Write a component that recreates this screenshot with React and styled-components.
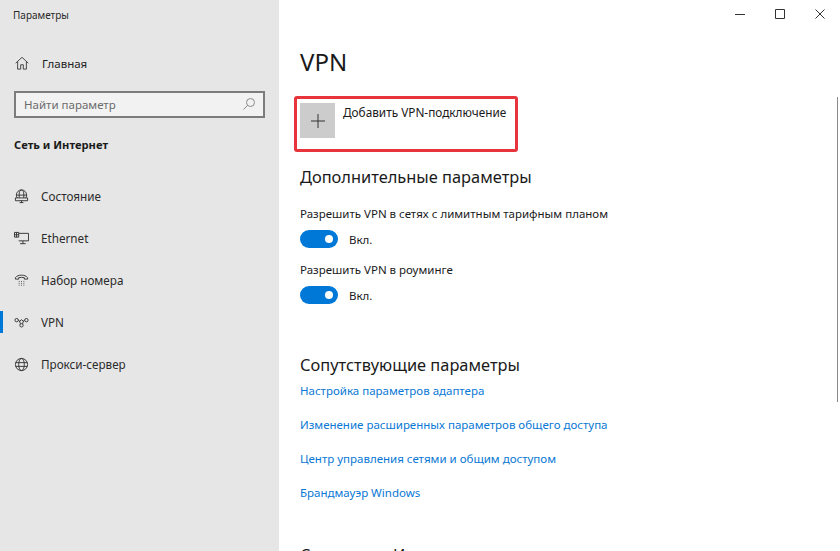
import React from "react"
import styled, { createGlobalStyle } from "styled-components"

const GlobalStyle = createGlobalStyle`
    html, body {
        margin: 0;
        padding: 0;
        height: 100%;
        overflow: hidden;
        background: #ffffff;
        font-family: "Noto Sans", "Open Sans", sans-serif;
        color: #1a1a1a;
    }
    #root {
        height: 100%;
    }
`

const Window = styled.div`
    display: flex;
    width: 840px;
    height: 551px;
    overflow: hidden;
`

const Sidebar = styled.aside`
    display: flex;
    flex-direction: column;
    flex: 0 0 279px;
    height: 551px;
    background: #e6e6e6;
`

const AppTitle = styled.div`
    padding: 8px 0 0 13px;
    height: 22px;
    font-size: 10px;
    line-height: 15px;
    color: #2a2a2a;
`

const HomeRow = styled.div`
    display: flex;
    align-items: center;
    gap: 13px;
    height: 42px;
    margin-top: 12px;
    padding-left: 15px;
    font-size: 11.5px;
    color: #222222;
`

const SearchBox = styled.div`
    display: flex;
    align-items: center;
    justify-content: space-between;
    box-sizing: border-box;
    width: 251px;
    height: 27px;
    margin: 7px 0 0 14px;
    padding: 0 7px 1px 8px;
    background: #f2f2f2;
    border: 2px solid #7c7c7c;
    font-size: 11.5px;
    color: #6b6b6b;
`

const SectionLabel = styled.div`
    margin: 19px 0 22px 14px;
    height: 16px;
    font-size: 11.2px;
    line-height: 16px;
    font-weight: 700;
    color: #1a1a1a;
`

const NavList = styled.nav`
    display: flex;
    flex-direction: column;
`

const NavItem = styled.div`
    position: relative;
    display: flex;
    align-items: center;
    gap: 12px;
    height: 42px;
    padding-left: 14px;
    font-size: 11.7px;
    color: #2b2b2b;

    &::before {
        content: "";
        display: ${props => (props.$active ? "block" : "none")};
        position: absolute;
        left: 0;
        top: 10px;
        width: 3px;
        height: 22px;
        background: #0078d7;
    }
`

const Main = styled.main`
    position: relative;
    flex: 1;
    height: 551px;
    overflow: hidden;
    padding-left: 21px;
`

const WindowControls = styled.div`
    position: absolute;
    top: 0;
    right: 0;
    display: flex;
`

const ControlButton = styled.div`
    display: flex;
    align-items: center;
    justify-content: center;
    width: 40px;
    height: 28px;
`

const Scrollbar = styled.div`
    position: absolute;
    top: 97px;
    right: 2px;
    width: 1px;
    height: 305px;
    background: #8a8a8a;
`

const PageTitle = styled.h1`
    margin: 0;
    padding-top: 44px;
    height: 52px;
    font-size: 24px;
    line-height: 36px;
    font-weight: 400;
    color: #1a1a1a;
`

const AddRow = styled.div`
    display: flex;
    box-sizing: border-box;
    gap: 8px;
    width: 224px;
    height: 56px;
    margin-left: -6px;
    padding: 4px 0 0 3px;
    border: 3px solid #e8353d;
    border-radius: 3px;
    font-size: 11.8px;
    line-height: 16px;
    color: #1a1a1a;
`

const PlusTile = styled.div`
    display: flex;
    align-items: center;
    justify-content: center;
    flex: 0 0 35px;
    height: 35px;
    background: #cccccc;
`

const AddLabel = styled.span`
    padding-top: 1px;
    white-space: nowrap;
`

const SectionTitle = styled.h2`
    margin: ${props => props.$top}px 0 0;
    font-size: 16.4px;
    line-height: 22px;
    font-weight: 400;
    color: #1a1a1a;
`

const OptionLabel = styled.div`
    margin-top: ${props => props.$top}px;
    font-size: 11.5px;
    line-height: 16px;
    color: #1a1a1a;
`

const ToggleRow = styled.div`
    display: flex;
    align-items: center;
    gap: 11px;
    height: 20px;
    margin-top: 7px;
    font-size: 11.5px;
    color: #1a1a1a;
`

const Toggle = styled.div`
    position: relative;
    width: 38px;
    height: 18px;
    border-radius: 9px;
    background: #0078d7;

    &::after {
        content: "";
        position: absolute;
        top: 5px;
        right: 5px;
        width: 8px;
        height: 8px;
        border-radius: 50%;
        background: #ffffff;
    }
`

const LinkList = styled.div`
    display: flex;
    flex-direction: column;
    gap: 18px;
    margin-top: 7px;
`

const SettingLink = styled.a`
    font-size: 11.5px;
    line-height: 16px;
    color: #0a78d4;
    text-decoration: none;
`

const Glyph = ({ size = 15, children }) => (
    <svg
        width={size}
        height={size}
        viewBox="0 0 16 16"
        fill="none"
        stroke="#333333"
        strokeWidth="1"
    >
        {children}
    </svg>
)

const HomeIcon = () => (
    <Glyph size={14}>
        <path d="M.8 8.2 8 1.500l7.200 6.700" />
        <path d="M3 6.500v8.500h3.500v-5h3v5H13V6.500" />
    </Glyph>
)

const SearchIcon = () => (
    <svg width="14" height="14" viewBox="0 0 14 14" fill="none" stroke="#8a8a8a" strokeWidth="1">
        <circle cx="8.500" cy="5.500" r="4" />
        <path d="M5.600 8.400 1.500 12.500" />
    </svg>
)

const StatusIcon = () => (
    <Glyph>
        <circle cx="8" cy="6.500" r="5.500" />
        <ellipse cx="8" cy="6.500" rx="2.500" ry="5.500" />
        <path d="M2.500 6.500h11" />
        <path d="M1.500 9.500h13v3h-13z" fill="#e6e6e6" />
        <path d="M6 14.500h4M8 12.500v2" />
    </Glyph>
)

const EthernetIcon = () => (
    <Glyph>
        <path d="M5 2.500h10.500v8H5" />
        <path d="M9.500 10.500v3M6.500 13.500h6" />
        <path d="M.5 1.500h4.500v5H.5zM.5 4h4.500M2.700 1.500v5" />
    </Glyph>
)

const DialIcon = () => (
    <Glyph>
        <path d="M1.500 6.500V5C3 3 5.300 2.300 8 2.300S13 3 14.500 5v1.500h-3.500V5C9.500 4.500 6.500 4.500 5 5v1.500z" />
        <path
            d="M5 9h1M7.500 9h1M10 9h1M5 11h1M7.500 11h1M10 11h1M5 13h1M7.500 13h1M10 13h1"
            stroke="#555555"
        />
    </Glyph>
)

const VpnIcon = () => (
    <Glyph>
        <circle cx="2.800" cy="5.500" r="1.800" />
        <circle cx="13.200" cy="5.500" r="1.800" />
        <circle cx="8" cy="11" r="1.800" />
        <path d="M4.600 5.500C6 5.500 6.800 9 6.800 9.500M11.400 5.500C10 5.500 9.200 9 9.200 9.500M5.500 7 8 5l2.500 2" />
    </Glyph>
)

const GlobeIcon = () => (
    <Glyph>
        <circle cx="8" cy="8" r="6.500" />
        <ellipse cx="8" cy="8" rx="3" ry="6.500" />
        <path d="M1.800 6h12.400M1.800 10h12.400" />
    </Glyph>
)

const navItems = [
    { label: "Состояние", icon: StatusIcon },
    { label: "Ethernet", icon: EthernetIcon },
    { label: "Набор номера", icon: DialIcon },
    { label: "VPN", icon: VpnIcon, active: true },
    { label: "Прокси-сервер", icon: GlobeIcon }
]

const links = [
    "Настройка параметров адаптера",
    "Изменение расширенных параметров общего доступа",
    "Центр управления сетями и общим доступом",
    "Брандмауэр Windows"
]

const App = () => (
    <Window>
        <GlobalStyle />
        <Sidebar>
            <AppTitle>Параметры</AppTitle>
            <HomeRow>
                <HomeIcon />
                Главная
            </HomeRow>
            <SearchBox>
                Найти параметр
                <SearchIcon />
            </SearchBox>
            <SectionLabel>Сеть и Интернет</SectionLabel>
            <NavList>
                {navItems.map(({ label, icon: Icon, active }) => (
                    <NavItem key={label} $active={active}>
                        <Icon />
                        {label}
                    </NavItem>
                ))}
            </NavList>
        </Sidebar>
        <Main>
            <WindowControls>
                <ControlButton>
                    <svg width="10" height="10" viewBox="0 0 10 10" stroke="#333333">
                        <path d="M0 5.500h10" />
                    </svg>
                </ControlButton>
                <ControlButton>
                    <svg width="10" height="10" viewBox="0 0 10 10" fill="none" stroke="#333333">
                        <path d="M.5.500h9v9h-9z" />
                    </svg>
                </ControlButton>
                <ControlButton>
                    <svg width="10" height="10" viewBox="0 0 10 10" stroke="#333333">
                        <path d="M.5.500l9 9M9.500.500l-9 9" />
                    </svg>
                </ControlButton>
            </WindowControls>
            <Scrollbar />
            <PageTitle>VPN</PageTitle>
            <AddRow>
                <PlusTile>
                    <svg width="16" height="16" viewBox="0 0 16 16" stroke="#333333">
                        <path d="M8 1v14M1 8h14" />
                    </svg>
                </PlusTile>
                <AddLabel>Добавить VPN-подключение</AddLabel>
            </AddRow>
            <SectionTitle $top={14}>Дополнительные параметры</SectionTitle>
            <OptionLabel $top={18}>Разрешить VPN в сетях с лимитным тарифным планом</OptionLabel>
            <ToggleRow>
                <Toggle />
                Вкл.
            </ToggleRow>
            <OptionLabel $top={13}>Разрешить VPN в роуминге</OptionLabel>
            <ToggleRow>
                <Toggle />
                Вкл.
            </ToggleRow>
            <SectionTitle $top={49}>Сопутствующие параметры</SectionTitle>
            <LinkList>
                {links.map(label => (
                    <SettingLink key={label}>{label}</SettingLink>
                ))}
            </LinkList>
            <SectionTitle $top={43}>Справка из Интернета</SectionTitle>
        </Main>
    </Window>
)

export default App
